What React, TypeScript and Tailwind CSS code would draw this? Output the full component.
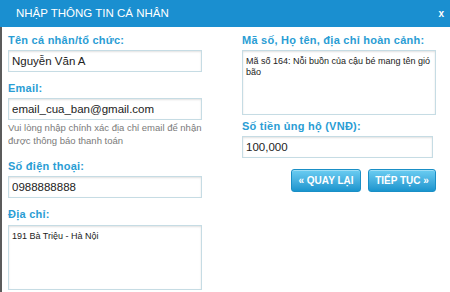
export default function App() {
  const label =
    "h-[14px] leading-[14px] text-[11px] font-bold text-[#2a9dd4] tracking-[0.25px] whitespace-nowrap";
  const input =
    "block h-[22px] w-full border border-[#c6dce4] bg-white shadow-[inset_0_1px_2px_rgba(0,0,0,0.12)] px-[3px] text-[11.5px] text-[#222] outline-none";
  const area =
    "block w-full border border-[#c6dce4] bg-white shadow-[inset_0_1px_2px_rgba(0,0,0,0.12)] px-[3px] pt-[5px] text-[9px] leading-[11px] text-[#222] outline-none resize-none overflow-hidden";
  const btn =
    "h-[23px] rounded-[3px] bg-linear-to-b from-[#6acdf2] to-[#1895ce] border border-[#1a8fc6] text-white font-bold text-[10px] flex items-center justify-center shadow-[inset_0_1px_0_rgba(255,255,255,0.35)]";
  return (
    <div className="w-[450px] h-[292px] bg-white font-['Liberation_Sans',Arial,sans-serif] overflow-hidden flex flex-col">
      <div className="h-[27px] shrink-0 bg-[#1a8fd0] flex items-center justify-between pl-[16px] pr-[6px]">
        <span className="text-white text-[11.5px] leading-none">NHẬP THÔNG TIN CÁ NHÂN</span>
        <span className="text-white text-[10px] font-bold leading-none">x</span>
      </div>
      <div className="flex-1 border-l-2 border-[#5b5b5b] pl-[6px] pt-[6px] flex gap-[40px]">
        <div className="w-[194px] flex flex-col">
          <div className={label}>Tên cá nhân/tổ chức:</div>
          <input className={input + " mt-[3px]"} readOnly value="Nguyễn Văn A" />
          <div className={label + " mt-[9px]"}>Email:</div>
          <input className={input + " mt-[3px]"} readOnly value="email_cua_ban@gmail.com" />
          <div className="mt-[1px] text-[9.5px] leading-[13px] text-[#7a7a7a]">
            Vui lòng nhập chính xác địa chỉ email để nhận
            <br />
            được thông báo thanh toán
          </div>
          <div className={label + " mt-[12px]"}>Số điện thoại:</div>
          <input className={input + " mt-[3px]"} readOnly value="0988888888" />
          <div className={label + " mt-[9px]"}>Địa chỉ:</div>
          <textarea className={area + " mt-[4px] h-[65px]"} readOnly value="191 Bà Triệu - Hà Nội" />
        </div>
        <div className="w-[194px] flex flex-col">
          <div className={label}>Mã số, Họ tên, địa chỉ hoàn cảnh:</div>
          <textarea
            className={area + " mt-[3px] h-[65px]"}
            readOnly
            value="Mã số 164: Nỗi buồn của cậu bé mang tên gió bão"
          />
          <div className={label + " mt-[4px]"}>Số tiền ủng hộ (VNĐ):</div>
          <input className={input + " mt-[3px] !w-[191px]"} readOnly value="100,000" />
          <div className="mt-[11px] flex justify-end gap-[7px]">
            <button className={btn + " w-[70px]"}>« QUAY LẠI</button>
            <button className={btn + " w-[68px]"}>TIẾP TỤC »</button>
          </div>
        </div>
      </div>
    </div>
  );
}
